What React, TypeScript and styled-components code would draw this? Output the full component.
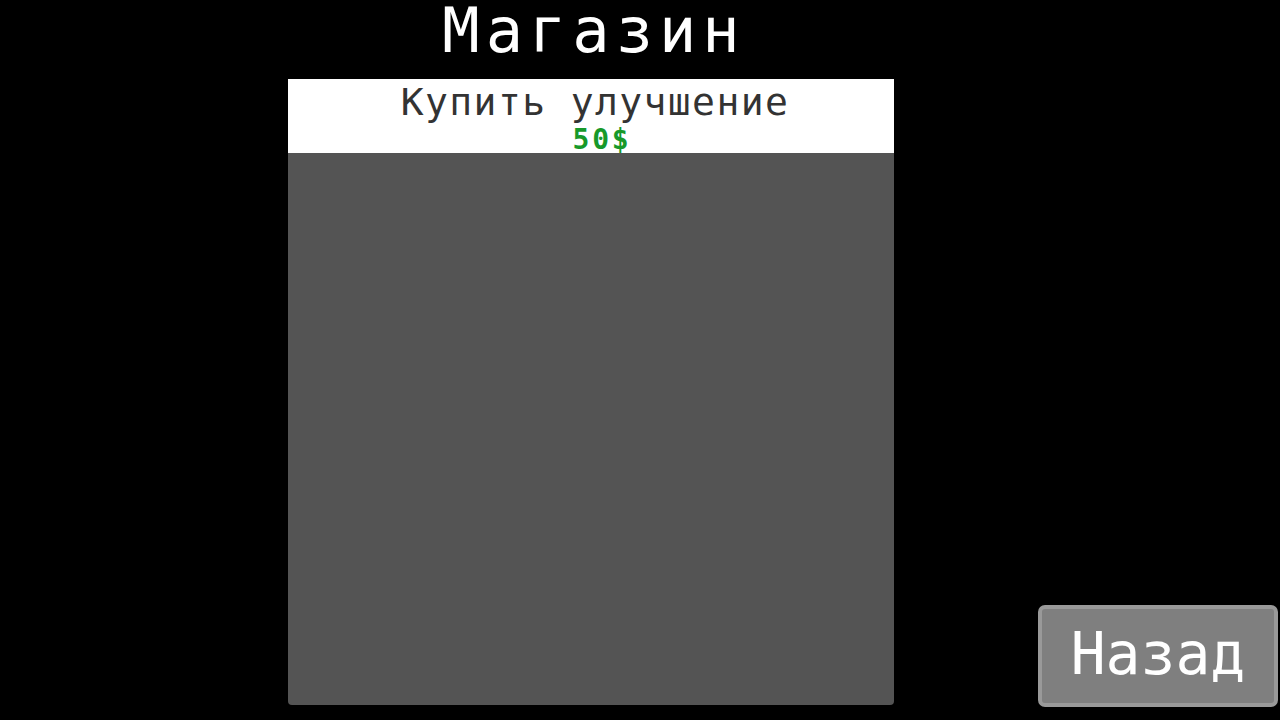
import React from 'react'
import styled, { createGlobalStyle } from 'styled-components'

//-----------------------------------------------------------------------------
// Global
//-----------------------------------------------------------------------------
const GlobalStyle = createGlobalStyle`
  html, body {
    margin: 0;
    padding: 0;
    background: #000;
  }
  body {
    font-family: "DejaVu Sans Mono", "Liberation Mono", monospace;
    overflow: hidden;
  }
`

//-----------------------------------------------------------------------------
// Component
//-----------------------------------------------------------------------------
const shopItems = [
  { name: 'Купить улучшение', price: '50$' }
]

const App = () => {
  return (
    <>
      <GlobalStyle />
      <Screen>
        <Main>
          <Title>Магазин</Title>
          <Panel>
            {shopItems.map(item => (
              <ItemRow key={item.name}>
                <ItemName>{item.name}</ItemName>
                <ItemPrice>{item.price}</ItemPrice>
              </ItemRow>
            ))}
            <PanelBody />
          </Panel>
        </Main>
        <Side>
          <BackButton>Назад</BackButton>
        </Side>
      </Screen>
    </>
  )
}

//-----------------------------------------------------------------------------
// Styled Components
//-----------------------------------------------------------------------------
const Screen = styled.div`
  width: 1280px;
  height: 720px;
  background: #000;
  display: flex;
  padding-left: 288px;
  box-sizing: border-box;
`

const Main = styled.div`
  width: 606px;
  display: flex;
  flex-direction: column;
`

const Title = styled.div`
  margin-bottom: 17px;
  height: 62px;
  line-height: 62px;
  font-size: 62px;
  letter-spacing: 6px;
  padding-left: 6px;
  text-align: center;
  color: #fff;
  white-space: nowrap;
`

const Panel = styled.div`
  width: 606px;
  height: 626px;
  display: flex;
  flex-direction: column;
  border-radius: 0 0 4px 4px;
  overflow: hidden;
`

const ItemRow = styled.div`
  height: 74px;
  box-sizing: border-box;
  padding-top: 4px;
  background: #fff;
  display: flex;
  flex-direction: column;
  align-items: center;
`

const ItemName = styled.div`
  font-size: 38px;
  line-height: 38px;
  letter-spacing: 1.4px;
  padding-left: 8px;
  color: #333;
  white-space: nowrap;
`

const ItemPrice = styled.div`
  margin-top: 5px;
  padding-left: 22px;
  font-size: 28px;
  line-height: 28px;
  font-weight: bold;
  letter-spacing: 2.8px;
  color: #17992a;
`

const PanelBody = styled.div`
  flex: 1;
  background: #545454;
`

const Side = styled.div`
  flex: 1;
  display: flex;
  align-items: flex-end;
  justify-content: flex-end;
  padding: 0 2px 13px 0;
`

const BackButton = styled.button`
  width: 240px;
  height: 102px;
  box-sizing: border-box;
  border: 4px solid #999;
  border-radius: 7px;
  background: #7f7f7f;
  color: #fff;
  font-family: "DejaVu Sans Mono", "Liberation Mono", monospace;
  font-size: 58px;
  line-height: 58px;
  padding: 0 0 4px 0;
  cursor: pointer;
  outline: none;
`

export default App
